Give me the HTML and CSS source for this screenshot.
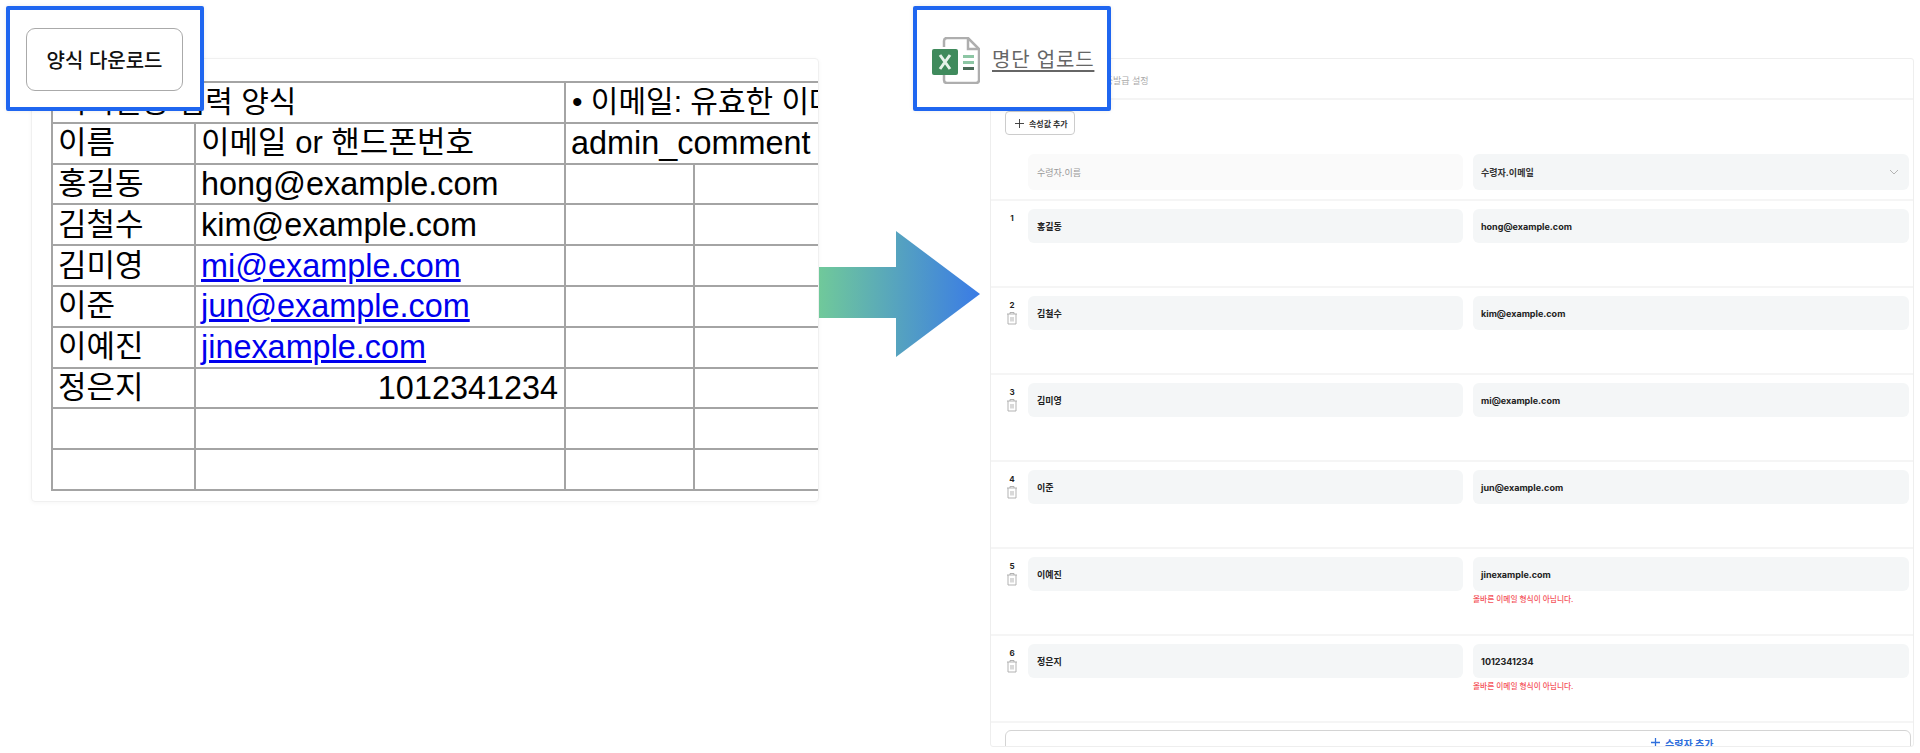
FILE: index.html
```html
<!DOCTYPE html>
<html lang="ko">
<head>
<meta charset="utf-8">
<title>명단 업로드</title>
<link rel="stylesheet" href="styles.css">
</head>
<body>
<div class="stage">
  <section class="sheet-card">
    <table class="sheet">
      <colgroup><col class="c1"><col class="c2"><col class="c3"><col class="c4"><col class="c5"></colgroup>
      <tr><td colspan="2" class="ko title">비회원용 입력 양식</td><td colspan="3" class="ko title">• 이메일: 유효한 이메일 주소</td></tr>
      <tr><td class="ko">이름</td><td class="ko">이메일 or 핸드폰번호</td><td colspan="3">admin_comment</td></tr>
      <tr><td class="ko">홍길동</td><td>hong@example.com</td><td></td><td></td><td></td></tr>
      <tr><td class="ko">김철수</td><td>kim@example.com</td><td></td><td></td><td></td></tr>
      <tr><td class="ko">김미영</td><td><a href="#">mi@example.com</a></td><td></td><td></td><td></td></tr>
      <tr><td class="ko">이준</td><td><a href="#">jun@example.com</a></td><td></td><td></td><td></td></tr>
      <tr><td class="ko">이예진</td><td><a href="#">jinexample.com</a></td><td></td><td></td><td></td></tr>
      <tr><td class="ko">정은지</td><td class="num">1012341234</td><td></td><td></td><td></td></tr>
      <tr><td></td><td></td><td></td><td></td><td></td></tr>
      <tr><td></td><td></td><td></td><td></td><td></td></tr>
    </table>
  </section>

  <svg class="arrow" viewBox="0 0 161 126" aria-hidden="true">
    <defs>
      <linearGradient id="arrowGrad" x1="0" y1="0" x2="1" y2="0">
        <stop offset="0" stop-color="#70c99a"/>
        <stop offset="1" stop-color="#3a7be6"/>
      </linearGradient>
    </defs>
    <path d="M0 36H77V0L161 63L77 126V87H0Z" fill="url(#arrowGrad)"/>
  </svg>

  <section class="form-card">
    <header class="form-head">수료증 자동발급 설정</header>
    <div class="toolbar">
      <button class="add-attr" type="button">
        <svg class="plus" viewBox="0 0 10 10" aria-hidden="true"><path d="M5 0V10M0 5H10"/></svg>
        속성값 추가
      </button>
    </div>
    <div class="row-head">
      <div class="field ghost">수령자.이름</div>
      <div class="field select">수령자.이메일
        <svg class="chev" viewBox="0 0 10 6" aria-hidden="true"><path d="M1 1L5 5L9 1"/></svg>
      </div>
    </div>

    <div class="row">
      <div class="gutter"><span class="idx">1</span></div>
      <div class="field">홍길동</div>
      <div class="cell"><div class="field">hong@example.com</div></div>
    </div>
    <div class="row">
      <div class="gutter"><span class="idx">2</span><svg class="trash" viewBox="0 0 12 14" aria-hidden="true"><path d="M1 3H11M4 3V1.5H8V3M2 3V13H10V3M5 6V10.500M7 6V10.500"/></svg></div>
      <div class="field">김철수</div>
      <div class="cell"><div class="field">kim@example.com</div></div>
    </div>
    <div class="row">
      <div class="gutter"><span class="idx">3</span><svg class="trash" viewBox="0 0 12 14" aria-hidden="true"><path d="M1 3H11M4 3V1.5H8V3M2 3V13H10V3M5 6V10.500M7 6V10.500"/></svg></div>
      <div class="field">김미영</div>
      <div class="cell"><div class="field">mi@example.com</div></div>
    </div>
    <div class="row">
      <div class="gutter"><span class="idx">4</span><svg class="trash" viewBox="0 0 12 14" aria-hidden="true"><path d="M1 3H11M4 3V1.5H8V3M2 3V13H10V3M5 6V10.500M7 6V10.500"/></svg></div>
      <div class="field">이준</div>
      <div class="cell"><div class="field">jun@example.com</div></div>
    </div>
    <div class="row">
      <div class="gutter"><span class="idx">5</span><svg class="trash" viewBox="0 0 12 14" aria-hidden="true"><path d="M1 3H11M4 3V1.5H8V3M2 3V13H10V3M5 6V10.500M7 6V10.500"/></svg></div>
      <div class="field">이예진</div>
      <div class="cell"><div class="field">jinexample.com</div><p class="err">올바른 이메일 형식이 아닙니다.</p></div>
    </div>
    <div class="row">
      <div class="gutter"><span class="idx">6</span><svg class="trash" viewBox="0 0 12 14" aria-hidden="true"><path d="M1 3H11M4 3V1.5H8V3M2 3V13H10V3M5 6V10.500M7 6V10.500"/></svg></div>
      <div class="field">정은지</div>
      <div class="cell"><div class="field">1012341234</div><p class="err">올바른 이메일 형식이 아닙니다.</p></div>
    </div>
    <div class="row-last">
      <button class="add-row" type="button">
        <svg class="plus blue" viewBox="0 0 10 10" aria-hidden="true"><path d="M5 0V10M0 5H10"/></svg>
        수령자 추가
      </button>
    </div>
  </section>

  <div class="callout callout-left">
    <button class="download" type="button">양식 다운로드</button>
  </div>
  <div class="callout callout-right">
    <svg class="xls" viewBox="0 0 48 47" aria-hidden="true">
      <path class="xls-doc" d="M12 10V4Q12 1 15 1H36L47 12V43Q47 46 44 46H15Q12 46 12 43V38"/>
      <path class="xls-doc" d="M36 1V12H47"/>
      <rect x="31" y="18" width="11" height="3" fill="#8cc6a4"/>
      <rect x="31" y="24" width="11" height="3" fill="#8cc6a4"/>
      <rect x="31" y="30" width="11" height="3" fill="#4a6a58"/>
      <rect x="0" y="12" width="26" height="26" rx="2" fill="#3f8a5c"/>
      <path d="M8 18L18 32M18 18L8 32" stroke="#e6f2ea" stroke-width="3" fill="none"/>
    </svg>
    <a class="upload" href="#">명단 업로드</a>
  </div>
</div>
</body>
</html>
```
FILE: styles.css
```css
* { box-sizing: border-box; }
html, body { margin: 0; padding: 0; background: #fff; }
body { font-family: "Liberation Sans", "Noto Sans CJK KR", sans-serif; color: #000; }

.stage {
  position: relative;
  display: flex;
  align-items: flex-start;
  width: 1920px;
  height: 753px;
  overflow: hidden;
  padding: 58px 0 0 31px;
}

/* left: spreadsheet */
.sheet-card {
  flex: none;
  width: 788px;
  height: 444px;
  padding: 22px 0 0 19px;
  border: 1px solid #f0f0f0;
  border-radius: 4px;
  box-shadow: 0 1px 4px rgba(0,0,0,.04);
  overflow: hidden;
}
.sheet {
  border-collapse: collapse;
  table-layout: fixed;
  width: 860px;
  font-size: 32.4px;
}
.c1 { width: 143px; }
.c2 { width: 370px; }
.c3 { width: 129px; }
.c4 { width: 129px; }
.c5 { width: 89px; }
.sheet tr { height: 40.8px; }
.sheet td {
  border: 2px solid #a4a4a4;
  padding: 0 5px;
  line-height: 36px;
  white-space: nowrap;
  overflow: hidden;
}
.sheet .ko { font-size: 31px; }
.sheet .title { font-size: 30px; padding-left: 6px; }
.sheet .num { text-align: right; padding-right: 6px; }
.sheet a { color: #0000ee; }

/* middle arrow */
.arrow {
  flex: none;
  width: 161px;
  height: 126px;
  margin-top: 173px;
}

/* right: form */
.form-card {
  flex: none;
  width: 924px;
  height: 689px;
  margin-left: 10px;
  border: 1px solid #eee;
  border-radius: 3px;
  overflow: hidden;
  font-family: Inter, "Noto Sans CJK KR", sans-serif;
  font-size: 9px;
}
.form-head {
  height: 41px;
  padding: 16px 0 0 78px;
  border-bottom: 2px solid #f4f4f4;
  color: #aaa;
  font-size: 9px;
  line-height: 12px;
}
.toolbar { padding: 11px 0 0 14px; height: 54px; }
.add-attr {
  display: flex;
  align-items: center;
  gap: 5px;
  width: 70px;
  height: 24px;
  padding: 0 0 0 9px;
  background: #fff;
  border: 1px solid #ccc;
  border-radius: 4px;
  font: 700 8px Inter, "Noto Sans CJK KR", sans-serif;
  color: #333;
}
.plus { width: 9px; height: 9px; flex: none; fill: none; stroke: #333; stroke-width: 1; }
.plus.blue { stroke: #2f6fdc; stroke-width: 1.4; }

.row-head {
  display: grid;
  grid-template-columns: 435px 436px;
  column-gap: 10px;
  padding: 0 0 9px 37px;
}
.row {
  display: grid;
  grid-template-columns: 13px 435px 436px;
  column-gap: 10px;
  height: 87px;
  padding: 8px 0 0 14px;
  border-top: 2px solid #f5f5f5;
}
.field {
  display: flex;
  align-items: center;
  height: 34px;
  padding: 0 9px;
  border-radius: 6px;
  background: #f4f6f7;
  color: #222;
  font-weight: 700;
  font-size: 9px;
}
.cell .field, .field.select { padding-left: 8px; }
.field.ghost { background: #fafafa; color: #999; font-weight: 400; height: 36px; }
.field.select { position: relative; height: 36px; color: #333; }
.chev {
  position: absolute;
  right: 10px;
  top: 15px;
  width: 10px;
  height: 6px;
  fill: none;
  stroke: #b4b4b4;
  stroke-width: 1;
}
.gutter { display: flex; flex-direction: column; align-items: center; width: 14px; padding-top: 3px; }
.idx { font-size: 8px; font-weight: 700; line-height: 12px; color: #222; }
.trash {
  width: 12px;
  height: 14px;
  fill: none;
  stroke: #aaa;
  stroke-width: .9;
}
.cell { min-width: 0; }
.err {
  margin: 4px 0 0;
  color: #f4525a;
  font-size: 7.7px;
  line-height: 10px;
  font-weight: 500;
}
.row-last { padding: 7px 2px 0 14px; border-top: 2px solid #f5f5f5; }
.add-row {
  display: flex;
  align-items: flex-start;
  gap: 5px;
  width: 100%;
  height: 40px;
  padding: 7px 0 0 645px;
  background: #fff;
  border: 1px solid #d4d4d4;
  border-radius: 6px;
  color: #2f6fdc;
  font: 700 10px/12px Inter, "Noto Sans CJK KR", sans-serif;
}

/* blue highlight boxes over the content */
.callout {
  position: absolute;
  top: 6px;
  width: 198px;
  height: 105px;
  background: #fff;
  border: 4px solid #1f66f0;
  border-radius: 2px;
  box-shadow: 0 0 4px rgba(0,0,0,.08);
  display: flex;
  align-items: center;
}
.callout-left { left: 6px; padding-left: 16px; }
.callout-right { left: 913px; padding-left: 15px; gap: 12px; }
.download {
  width: 157px;
  height: 63px;
  margin-top: 1px;
  background: #fff;
  border: 1px solid #aaa;
  border-radius: 9px;
  color: #111;
  font: 500 20px "Noto Sans CJK KR", sans-serif;
}
.xls { flex: none; width: 48px; height: 47px; margin-top: 3px; }
.xls-doc { fill: none; stroke: #aeaeae; stroke-width: 2.500; }
.upload {
  color: #666;
  font: 400 20px "Noto Sans CJK KR", sans-serif;
  letter-spacing: .8px;
  text-decoration: underline;
  text-underline-offset: 3px;
  white-space: nowrap;
}
```
